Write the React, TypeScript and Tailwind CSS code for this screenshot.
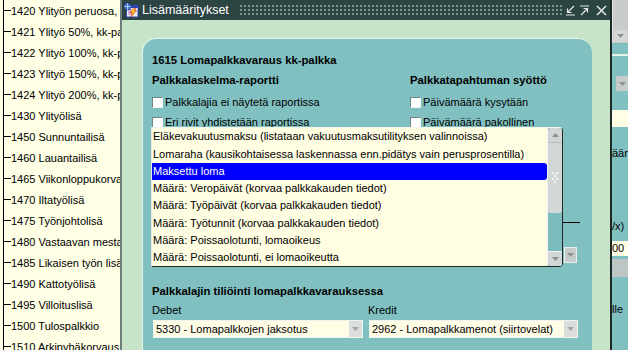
import React from 'react';

const treeItems = [
  '1420 Ylityön peruosa, kk-palkka',
  '1421 Ylityö 50%, kk-palkka',
  '1422 Ylityö 100%, kk-palkka',
  '1423 Ylityö 150%, kk-palkka',
  '1424 Ylityö 200%, kk-palkka',
  '1430 Ylityölisä',
  '1450 Sunnuntailisä',
  '1460 Lauantailisä',
  '1465 Viikonloppukorvaus',
  '1470 Iltatyölisä',
  '1475 Työnjohtolisä',
  '1480 Vastaavan mestarin lisä',
  '1485 Likaisen työn lisä',
  '1490 Kattotyölisä',
  '1495 Villoituslisä',
  '1500 Tulospalkkio',
  '1510 Arkipyhäkorvaus',
];

const options = [
  'Eläkevakuutusmaksu (listataan vakuutusmaksutilityksen valinnoissa)',
  'Lomaraha (kausikohtaisessa laskennassa enn.pidätys vain perusprosentilla)',
  'Maksettu loma',
  'Määrä: Veropäivät (korvaa palkkakauden tiedot)',
  'Määrä: Työpäivät (korvaa palkkakauden tiedot)',
  'Määrä: Työtunnit (korvaa palkkakauden tiedot)',
  'Määrä: Poissaolotunti, lomaoikeus',
  'Määrä: Poissaolotunti, ei lomaoikeutta',
];

const Tri = ({ up = false, color = '#8a8a8a' }: { up?: boolean; color?: string }) => (
  <svg width="7" height="4" viewBox="0 0 7 4">
    <path d={up ? 'M0 4 L3.5 0 L7 4 Z' : 'M0 0 L7 0 L3.5 4 Z'} fill={color} />
  </svg>
);

const Check = ({ label }: { label: string }) => (
  <div className="flex items-center h-[12px] gap-[2px] whitespace-nowrap">
    <span className="w-[11px] h-[11px] shrink-0 bg-white border border-[#6f8585] border-r-[#eef2f2] border-b-[#eef2f2]" />
    <span className="leading-[12px]">{label}</span>
  </div>
);

const Combo = ({ value, width }: { value: string; width: string }) => (
  <div className={`flex items-center h-[18px] bg-[#fffde6] border border-[#eef4ee] ${width}`}>
    <span className="flex-1 pl-[2px] whitespace-nowrap overflow-hidden leading-[16px]">{value}</span>
    <span className="w-[13px] h-[16px] bg-[#dcdedc] flex items-center justify-center">
      <Tri color="#a2a6a6" />
    </span>
  </div>
);

const TitleBar = () => (
  <div className="h-[20px] flex items-center bg-[#2c4442] pl-[1px] pr-[3px]">
    <svg width="16" height="16" viewBox="0 0 16 16" className="shrink-0">
      <rect x="3.5" y="3.5" width="11.5" height="11.5" fill="#f2f2f2" stroke="#2848a8" />
      <rect x="3.5" y="3.5" width="11.5" height="2.5" fill="#2848c0" />
      <path d="M5 8 H13 M5 10 H12 M5 12 H11" stroke="#b040b0" strokeWidth="0.8" />
      <path d="M11 6 L7 10.5 H9.5 L7.5 15 L13.5 9 H11 L13 6 Z" fill="#f8e020" stroke="#d02020" strokeWidth="0.6" />
      <circle cx="4.5" cy="4.5" r="3.6" fill="#3c78cc" stroke="#1c2c5c" strokeWidth="0.6" />
      <path d="M1.2 4.5 H7.8 M4.5 1.2 V7.8" stroke="#c8e4ff" strokeWidth="0.7" />
    </svg>
    <span className="ml-[3px] text-white text-[12.5px] leading-[20px] whitespace-nowrap">Lisämääritykset</span>
    <div className="flex-1 h-[12px] ml-[10px] mr-[2px] bg-[radial-gradient(#7e9692_0.9px,transparent_1.1px)] bg-[length:4px_4px]" />
    <svg width="11" height="11" viewBox="0 0 11 11" className="shrink-0">
      <path d="M9 1 L2.5 7.5 M2.5 3.5 V7.5 H6.5 M1 10 H10" stroke="#e6ecea" strokeWidth="1.2" fill="none" />
    </svg>
    <svg width="11" height="11" viewBox="0 0 11 11" className="shrink-0 ml-[3px]">
      <path d="M1 1 H10 M2 10 L8.5 3.5 M4.5 3.5 H8.5 V7.5" stroke="#e6ecea" strokeWidth="1.2" fill="none" />
    </svg>
    <svg width="11" height="11" viewBox="0 0 11 11" className="shrink-0 ml-[6px]">
      <path d="M1 1 L10 10 M10 1 L1 10" stroke="#e6ecea" strokeWidth="1.5" fill="none" />
    </svg>
  </div>
);

const Popup = () => (
  <div className="absolute left-[8px] top-[88px] w-[412px] h-[140px] flex bg-[#fffde2] border border-t-[#f4f6ec] border-l-[#e6eadc] border-r-[#262626] border-b-[#262626] rounded-r-[4px]">
    <div className="flex-1 flex flex-col">
      {options.map((o, i) => (
        <div
          key={o}
          className={
            i === 2
              ? 'h-[17.3px] flex items-center pl-[1px] whitespace-nowrap bg-[#0000ff] text-white rounded-r-[3px]'
              : 'h-[17.3px] flex items-center pl-[1px] whitespace-nowrap'
          }
        >
          {o}
        </div>
      ))}
    </div>
    <div className="w-[15px] flex flex-col bg-[#7cbcbc] border-l border-[#f2f4ee]">
      <div className="h-[15px] bg-[#d2d6d6] rounded-t-[3px] flex items-center justify-center border-b border-[#b8bebe]">
        <Tri up color="#8c9090" />
      </div>
      <div className="h-[70px] bg-[#d2d6d6] flex items-center justify-center rounded-b-[2px]">
        <svg width="8" height="14" viewBox="0 0 8 14">
          {[[2, 2], [6, 2], [4, 5], [2, 8], [6, 8], [4, 11]].map(([x, y]) => (
            <circle key={`${x}-${y}`} cx={x} cy={y} r="1" fill="#ffffff" />
          ))}
        </svg>
      </div>
      <div className="flex-1" />
      <div className="h-[15px] bg-[#d2d6d6] rounded-b-[3px] flex items-center justify-center border-t border-[#eef0f0]">
        <Tri color="#8c9090" />
      </div>
    </div>
  </div>
);

const Panel = () => (
  <div className="relative flex-1 bg-[#80c0c0] rounded-t-[14px] border-t border-l border-[#e8f4ec] pl-[9px] pr-[10px] pt-[14px]">
    <div className="h-[14px] leading-[14px] font-bold text-[11.3px] whitespace-nowrap">1615 Lomapalkkavaraus kk-palkka</div>
    <div className="grid grid-cols-[258px_1fr] mt-[6px]">
      <div>
        <div className="h-[14px] leading-[14px] font-bold text-[11.3px]">Palkkalaskelma-raportti</div>
        <div className="mt-[9px] flex flex-col gap-[8px]">
          <Check label="Palkkalajia ei näytetä raportissa" />
          <Check label="Eri rivit yhdistetään raportissa" />
        </div>
      </div>
      <div>
        <div className="h-[14px] leading-[14px] font-bold text-[11.3px]">Palkkatapahtuman syöttö</div>
        <div className="mt-[9px] flex flex-col gap-[8px]">
          <Check label="Päivämäärä kysytään" />
          <Check label="Päivämäärä pakollinen" />
        </div>
      </div>
    </div>
    <div className="h-[156px] flex flex-col items-end">
      <div className="mt-[94px] mr-[2px] w-[17px] h-px bg-black" />
      <div className="mt-[24px] mr-[5px] w-[13px] h-[16px] bg-[#c6cccc] border border-[#e8eeee] flex items-center justify-center">
        <Tri color="#8c9494" />
      </div>
    </div>
    <div className="h-[14px] leading-[14px] font-bold text-[11.3px] whitespace-nowrap">Palkkalajin tiliöinti lomapalkkavarauksessa</div>
    <div className="grid grid-cols-[216px_210px] mt-[5px]">
      <div className="h-[14px] leading-[14px]">Debet</div>
      <div className="h-[14px] leading-[14px]">Kredit</div>
    </div>
    <div className="grid grid-cols-[216px_210px] mt-[3px]">
      <div className="pl-[1px]">
        <Combo value="5330 - Lomapalkkojen jaksotus" width="w-[210px]" />
      </div>
      <div className="pl-[1px]">
        <Combo value="2962 - Lomapalkkamenot (siirtovelat)" width="w-[209px]" />
      </div>
    </div>
    <Popup />
  </div>
);

const RightStrip = () => (
  <div className="w-[16px] shrink-0 flex flex-col bg-[#80c0c0] overflow-hidden">
    <div className="h-[43px] bg-[#c8cdcc] border-l border-[#e4e8e8] flex flex-col justify-end items-center pb-[1px]">
      <div className="w-[13px] h-[12px] bg-[#d4d8d8] rounded-[2px] flex items-center justify-center">
        <Tri color="#8c9494" />
      </div>
    </div>
    <div className="h-[11px]" />
    <div className="h-[2px] bg-[#e6f2ea]" />
    <div className="h-[20px]" />
    <div className="h-[15px] flex justify-end">
      <div className="w-[12px] bg-[#c6cccc] flex items-center justify-center">
        <Tri color="#8c9494" />
      </div>
    </div>
    <div className="h-[19px]" />
    <div className="h-[17px] bg-[#fffde6]" />
    <div className="h-[19px]" />
    <div className="h-[14px] leading-[14px] whitespace-nowrap">ään</div>
    <div className="h-[59px]" />
    <div className="h-[14px] leading-[14px] whitespace-nowrap">/x)</div>
    <div className="h-[8px]" />
    <div className="h-[15px] leading-[15px] bg-[#fffde6] whitespace-nowrap">00</div>
    <div className="h-[3px]" />
    <div className="h-[18px] bg-[#bcc6c6]" />
    <div className="h-[25px]" />
    <div className="h-[14px] leading-[14px] whitespace-nowrap">lle</div>
  </div>
);

export default function App() {
  return (
    <div className="flex w-[628px] h-[350px] overflow-hidden bg-[#80c0c0] font-['Liberation_Sans',Arial,sans-serif] text-[11px] text-black">
      <div className="w-[120px] shrink-0 h-full overflow-hidden bg-[#ffffe6]">
        <div className="ml-[3px] border-l border-black h-full">
          {treeItems.map((t) => (
            <div key={t} className="flex items-center h-[21px] whitespace-nowrap">
              <span className="w-[7px] h-px bg-black shrink-0" />
              <span className="leading-[14px]">{t}</span>
            </div>
          ))}
        </div>
      </div>
      <div className="w-[492px] shrink-0 flex flex-col border-l-2 border-r-2 border-l-[#6d7d7a] border-r-[#1c2826]">
        <TitleBar />
        <div className="flex-1 flex flex-col bg-[#c8e4c8] pl-[20px] pt-[18px] pr-[18px]">
          <Panel />
        </div>
      </div>
      <RightStrip />
    </div>
  );
}
